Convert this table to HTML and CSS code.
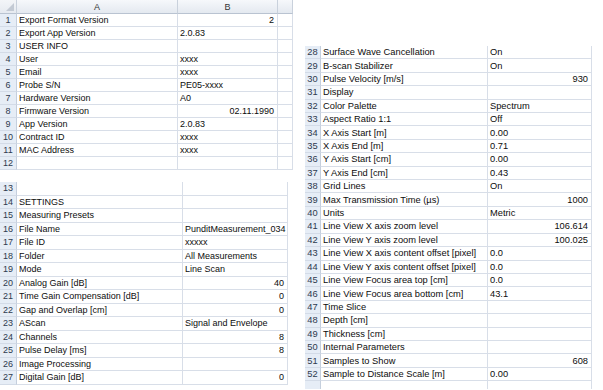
FILE: index.html
```html
<!DOCTYPE html>
<html>
<head>
<meta charset="utf-8">
<link rel="stylesheet" href="styles.css">
</head>
<body>
<div class="page">
  <div class="left">
    <div class="sheet s-top">
      <div class="hdr corner"><span class="tri"></span></div><div class="hdr">A</div><div class="hdr">B</div><div class="hdr"></div>
      <div class="rn">1</div><div class="c">Export Format Version</div><div class="c num">2</div><div class="c"></div>
      <div class="rn">2</div><div class="c">Export App Version</div><div class="c">2.0.83</div><div class="c"></div>
      <div class="rn">3</div><div class="c">USER INFO</div><div class="c"></div><div class="c"></div>
      <div class="rn">4</div><div class="c">User</div><div class="c">xxxx</div><div class="c"></div>
      <div class="rn">5</div><div class="c">Email</div><div class="c">xxxx</div><div class="c"></div>
      <div class="rn">6</div><div class="c">Probe S/N</div><div class="c">PE05-xxxx</div><div class="c"></div>
      <div class="rn">7</div><div class="c">Hardware Version</div><div class="c">A0</div><div class="c"></div>
      <div class="rn">8</div><div class="c">Firmware Version</div><div class="c num">02.11.1990</div><div class="c"></div>
      <div class="rn">9</div><div class="c">App Version</div><div class="c">2.0.83</div><div class="c"></div>
      <div class="rn">10</div><div class="c">Contract ID</div><div class="c">xxxx</div><div class="c"></div>
      <div class="rn">11</div><div class="c">MAC Address</div><div class="c">xxxx</div><div class="c"></div>
      <div class="rn">12</div><div class="c"></div><div class="c"></div><div class="c"></div>
    </div>
    <div class="sheet s-low">
      <div class="rn">13</div><div class="c"></div><div class="c"></div>
      <div class="rn">14</div><div class="c">SETTINGS</div><div class="c"></div>
      <div class="rn">15</div><div class="c">Measuring Presets</div><div class="c"></div>
      <div class="rn">16</div><div class="c">File Name</div><div class="c tight">PunditMeasurement_034</div>
      <div class="rn">17</div><div class="c">File ID</div><div class="c">xxxxx</div>
      <div class="rn">18</div><div class="c">Folder</div><div class="c">All Measurements</div>
      <div class="rn">19</div><div class="c">Mode</div><div class="c">Line Scan</div>
      <div class="rn">20</div><div class="c">Analog Gain [dB]</div><div class="c num">40</div>
      <div class="rn">21</div><div class="c">Time Gain Compensation [dB]</div><div class="c num">0</div>
      <div class="rn">22</div><div class="c">Gap and Overlap [cm]</div><div class="c num">0</div>
      <div class="rn">23</div><div class="c">AScan</div><div class="c">Signal and Envelope</div>
      <div class="rn">24</div><div class="c">Channels</div><div class="c num">8</div>
      <div class="rn">25</div><div class="c">Pulse Delay [ms]</div><div class="c num">8</div>
      <div class="rn">26</div><div class="c">Image Processing</div><div class="c"></div>
      <div class="rn">27</div><div class="c">Digital Gain [dB]</div><div class="c num">0</div>
    </div>
  </div>
  <div class="sheet s-right">
    <div class="rn">28</div><div class="c">Surface Wave Cancellation</div><div class="c">On</div>
    <div class="rn">29</div><div class="c">B-scan Stabilizer</div><div class="c">On</div>
    <div class="rn">30</div><div class="c">Pulse Velocity [m/s]</div><div class="c num">930</div>
    <div class="rn">31</div><div class="c">Display</div><div class="c"></div>
    <div class="rn">32</div><div class="c">Color Palette</div><div class="c">Spectrum</div>
    <div class="rn">33</div><div class="c">Aspect Ratio 1:1</div><div class="c">Off</div>
    <div class="rn">34</div><div class="c">X Axis Start [m]</div><div class="c">0.00</div>
    <div class="rn">35</div><div class="c">X Axis End [m]</div><div class="c">0.71</div>
    <div class="rn">36</div><div class="c">Y Axis Start [cm]</div><div class="c">0.00</div>
    <div class="rn">37</div><div class="c">Y Axis End [cm]</div><div class="c">0.43</div>
    <div class="rn">38</div><div class="c">Grid Lines</div><div class="c">On</div>
    <div class="rn">39</div><div class="c">Max Transmission Time (µs)</div><div class="c num">1000</div>
    <div class="rn">40</div><div class="c">Units</div><div class="c">Metric</div>
    <div class="rn">41</div><div class="c">Line View X axis zoom level</div><div class="c num">106.614</div>
    <div class="rn">42</div><div class="c">Line View Y axis zoom level</div><div class="c num">100.025</div>
    <div class="rn">43</div><div class="c">Line View X axis content offset [pixel]</div><div class="c">0.0</div>
    <div class="rn">44</div><div class="c">Line View Y axis content offset [pixel]</div><div class="c">0.0</div>
    <div class="rn">45</div><div class="c">Line View Focus area top [cm]</div><div class="c">0.0</div>
    <div class="rn">46</div><div class="c">Line View Focus area bottom [cm]</div><div class="c">43.1</div>
    <div class="rn">47</div><div class="c">Time Slice</div><div class="c"></div>
    <div class="rn">48</div><div class="c">Depth [cm]</div><div class="c"></div>
    <div class="rn">49</div><div class="c">Thickness [cm]</div><div class="c"></div>
    <div class="rn">50</div><div class="c">Internal Parameters</div><div class="c"></div>
    <div class="rn">51</div><div class="c">Samples to Show</div><div class="c num">608</div>
    <div class="rn">52</div><div class="c">Sample to Distance Scale [m]</div><div class="c">0.00</div>
    <div class="rn"></div><div class="c"></div><div class="c"></div>
  </div>
</div>
</body>
</html>
```

FILE: styles.css
```css
html, body {
  margin: 0;
  padding: 0;
  background: #ffffff;
}
body {
  width: 603px;
  height: 390px;
  overflow: hidden;
  font-family: "Liberation Sans", Arial, sans-serif;
  color: #0d0d0d;
}
.page {
  display: flex;
  gap: 12px;
  align-items: flex-start;
}
.left {
  display: flex;
  flex-direction: column;
  gap: 12px;
  width: 293px;
}
.sheet {
  display: grid;
  font-size: 9px;
}
.s-top {
  grid-template-columns: 17px 161px 100px 15px;
  grid-template-rows: 14px;
  grid-auto-rows: 13px;
}
.s-low {
  grid-template-columns: 17px 166px 105px;
  grid-auto-rows: 13.5px;
}
.s-right {
  margin-top: 46px;
  grid-template-columns: 16px 167px 104px;
  grid-auto-rows: 13.42px;
  font-size: 9.3px;
  height: 343px;
  overflow: hidden;
}
.hdr {
  background: linear-gradient(#f6f8fb, #e4e9f0);
  border-right: 1px solid #c9d1dc;
  border-bottom: 1px solid #b9c3d1;
  color: #333;
  display: flex;
  align-items: center;
  justify-content: center;
  position: relative;
  font-size: 9px;
}
.hdr:last-child {
  border-right: none;
}
.corner {
  background: linear-gradient(#f3f5f8, #e6eaf0);
}
.tri {
  position: absolute;
  right: 2px;
  bottom: 2px;
  width: 0;
  height: 0;
  border-left: 8px solid transparent;
  border-bottom: 8px solid #c3cad4;
}
.rn {
  background: #e6edf6;
  color: #2e3a4e;
  border-right: 1px solid #c5cfdd;
  border-bottom: 1px solid #d3dbe7;
  display: flex;
  align-items: center;
  justify-content: center;
  white-space: nowrap;
  overflow: hidden;
}
.c {
  border-right: 1px solid #d8dee8;
  border-bottom: 1px solid #d8dee8;
  padding: 0 2px;
  display: flex;
  align-items: center;
  white-space: nowrap;
  overflow: hidden;
}
.tight {
  padding: 0 0 0 2px;
}
.num {
  justify-content: flex-end;
  padding-right: 3px;
}
```
